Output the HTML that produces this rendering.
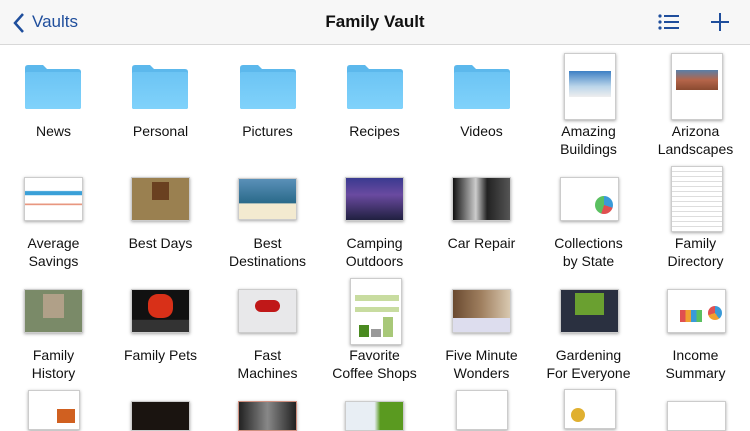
<!DOCTYPE html><html><head><style>
body{margin:0;width:750px;height:422px;overflow:hidden;background:#fff;font-family:"Liberation Sans",sans-serif;position:relative}
.hdr{position:absolute;left:0;top:0;width:750px;height:44px;background:#f7f7f7;border-bottom:1px solid #d8d8d8}
.t{position:absolute;font-size:17px}
.lbl{position:absolute;width:107px;text-align:center;font-size:14px;line-height:18px;color:#111}
.th{position:absolute;box-shadow:0 1px 3px rgba(0,0,0,.35);border:1px solid #ccc;box-sizing:border-box}
.fold{position:absolute;width:56px;height:44px}
</style></head><body>
<div class="hdr">
<svg style="position:absolute;left:12px;top:12px" width="14" height="22"><path d="M11 2 L3 11 L11 20" stroke="#1f4e9c" stroke-width="2.5" fill="none"/></svg>
<div class="t" style="left:32px;top:12px;color:#1f4e9c;font-size:17px">Vaults</div>
<div class="t" style="left:0;width:750px;text-align:center;top:12px;font-weight:bold;color:#111">Family Vault</div>
<svg style="position:absolute;left:658px;top:13px" width="22" height="18" fill="#1f4e9c"><circle cx="2" cy="3" r="1.6"/><circle cx="2" cy="9" r="1.6"/><circle cx="2" cy="15" r="1.6"/><rect x="6" y="2" width="15" height="2"/><rect x="6" y="8" width="15" height="2"/><rect x="6" y="14" width="15" height="2"/></svg>
<svg style="position:absolute;left:710px;top:12px" width="20" height="20"><path d="M10 1V19M1 10H19" stroke="#1f4e9c" stroke-width="2"/></svg>
</div>
<!-- folders -->
<svg width="0" height="0"><defs><linearGradient id="fg" x1="0" y1="0" x2="0" y2="1"><stop offset="0" stop-color="#6cc4f4"/><stop offset="1" stop-color="#80d2fb"/></linearGradient></defs></svg>
<script></script>
<div id="f"></div>
<svg class="fold" style="left:25px;top:65px" viewBox="0 0 56 44"><path d="M0 3Q0 0 3 0H18L22 4H53Q56 4 56 7V42Q56 44 54 44H2Q0 44 0 42Z" fill="#5cb8ec"/><path d="M0 9Q0 7 2 7H54Q56 7 56 9V42Q56 44 54 44H2Q0 44 0 42Z" fill="url(#fg)"/></svg>
<svg class="fold" style="left:132px;top:65px" viewBox="0 0 56 44"><path d="M0 3Q0 0 3 0H18L22 4H53Q56 4 56 7V42Q56 44 54 44H2Q0 44 0 42Z" fill="#5cb8ec"/><path d="M0 9Q0 7 2 7H54Q56 7 56 9V42Q56 44 54 44H2Q0 44 0 42Z" fill="url(#fg)"/></svg>
<svg class="fold" style="left:240px;top:65px" viewBox="0 0 56 44"><path d="M0 3Q0 0 3 0H18L22 4H53Q56 4 56 7V42Q56 44 54 44H2Q0 44 0 42Z" fill="#5cb8ec"/><path d="M0 9Q0 7 2 7H54Q56 7 56 9V42Q56 44 54 44H2Q0 44 0 42Z" fill="url(#fg)"/></svg>
<svg class="fold" style="left:347px;top:65px" viewBox="0 0 56 44"><path d="M0 3Q0 0 3 0H18L22 4H53Q56 4 56 7V42Q56 44 54 44H2Q0 44 0 42Z" fill="#5cb8ec"/><path d="M0 9Q0 7 2 7H54Q56 7 56 9V42Q56 44 54 44H2Q0 44 0 42Z" fill="url(#fg)"/></svg>
<svg class="fold" style="left:454px;top:65px" viewBox="0 0 56 44"><path d="M0 3Q0 0 3 0H18L22 4H53Q56 4 56 7V42Q56 44 54 44H2Q0 44 0 42Z" fill="#5cb8ec"/><path d="M0 9Q0 7 2 7H54Q56 7 56 9V42Q56 44 54 44H2Q0 44 0 42Z" fill="url(#fg)"/></svg>
<div class="th" style="left:564px;top:53px;width:52px;height:67px;background:#fff"><div style="margin:17px 4px 0;height:26px;background:linear-gradient(#3d7fc4,#bcd6ea 60%,#eee)"></div></div>
<div class="th" style="left:671px;top:53px;width:52px;height:67px;background:#fff"><div style="margin:16px 4px 0;height:20px;background:linear-gradient(#5a7fa8,#b5654a 50%,#8a4a30)"></div></div>
<div class="lbl" style="left:0;top:122px">News</div>
<div class="lbl" style="left:107px;top:122px">Personal</div>
<div class="lbl" style="left:214px;top:122px">Pictures</div>
<div class="lbl" style="left:321px;top:122px">Recipes</div>
<div class="lbl" style="left:428px;top:122px">Videos</div>
<div class="lbl" style="left:535px;top:122px">Amazing<br>Buildings</div>
<div class="lbl" style="left:642px;top:122px">Arizona<br>Landscapes</div>
<!-- row 2 -->
<div class="th" style="left:24px;top:177px;width:59px;height:44px;background:linear-gradient(#fff 30%,#3aa0d8 32%,#3aa0d8 40%,#fff 42%,#fff 60%,#e07050 62%,#fff 66%)"></div>
<div class="th" style="left:131px;top:177px;width:59px;height:44px;background:#9a8050"><div style="margin:4px 20px;height:18px;background:#6a4020"></div></div>
<div class="th" style="left:238px;top:178px;width:59px;height:42px;background:linear-gradient(#5a90b8,#2a6a8a 60%,#f3ead0 62%)"></div>
<div class="th" style="left:345px;top:177px;width:59px;height:44px;background:linear-gradient(#3a3a90,#6a4aa0 40%,#202040)"></div>
<div class="th" style="left:452px;top:177px;width:59px;height:44px;background:linear-gradient(90deg,#111,#ccc 40%,#222 60%,#555)"></div>
<div class="th" style="left:560px;top:177px;width:59px;height:44px;background:#fff"><div style="position:absolute;left:34px;top:18px;width:18px;height:18px;border-radius:50%;background:conic-gradient(#3a9ad8 0 30%,#e05050 0 55%,#5ac060 0)"></div></div>
<div class="th" style="left:671px;top:166px;width:52px;height:66px;background:repeating-linear-gradient(#fff 0 4px,#ddd 4px 5px)"></div>
<div class="lbl" style="left:0;top:234px">Average<br>Savings</div>
<div class="lbl" style="left:107px;top:234px">Best Days</div>
<div class="lbl" style="left:214px;top:234px">Best<br>Destinations</div>
<div class="lbl" style="left:321px;top:234px">Camping<br>Outdoors</div>
<div class="lbl" style="left:428px;top:234px">Car Repair</div>
<div class="lbl" style="left:535px;top:234px">Collections<br>by State</div>
<div class="lbl" style="left:642px;top:234px">Family<br>Directory</div>
<!-- row 3 -->
<div class="th" style="left:24px;top:289px;width:59px;height:44px;background:#7a8a68"><div style="margin:4px 18px;height:24px;background:#b0a088"></div></div>
<div class="th" style="left:131px;top:289px;width:59px;height:44px;background:linear-gradient(#111 70%,#333 72%)"><div style="margin:4px 16px;height:24px;background:#d83018;border-radius:40%"></div></div>
<div class="th" style="left:238px;top:289px;width:59px;height:44px;background:#e8e8ea"><div style="margin:10px 16px;height:12px;background:#c01818;border-radius:6px"></div></div>
<div class="th" style="left:350px;top:278px;width:52px;height:67px;background:#fff"><div style="position:absolute;left:8px;top:46px;width:10px;height:12px;background:#4a8a20"></div><div style="position:absolute;left:20px;top:50px;width:10px;height:8px;background:#999"></div><div style="position:absolute;left:32px;top:38px;width:10px;height:20px;background:#a8c878"></div><div style="position:absolute;left:4px;top:16px;width:44px;height:6px;background:#c8dca0"></div><div style="position:absolute;left:4px;top:28px;width:44px;height:5px;background:#c8dca0"></div></div>
<div class="th" style="left:452px;top:289px;width:59px;height:44px;background:linear-gradient(90deg,#6a4a30,#a08060 50%,#d8c8b0)"><div style="position:absolute;bottom:0;left:0;right:0;height:14px;background:#dde"></div></div>
<div class="th" style="left:560px;top:289px;width:59px;height:44px;background:#2a3040"><div style="margin:3px 14px;height:22px;background:#6aa030"></div></div>
<div class="th" style="left:667px;top:289px;width:59px;height:44px;background:#fff"><div style="position:absolute;left:40px;top:16px;width:14px;height:14px;border-radius:50%;background:conic-gradient(#3a9ad8 0 40%,#f0a030 0 70%,#e05050 0)"></div><div style="position:absolute;left:12px;top:20px;width:22px;height:12px;background:linear-gradient(90deg,#e05050 25%,#f0a030 25% 50%,#3a9ad8 50% 75%,#5ac060 75%)"></div></div>
<div class="lbl" style="left:0;top:346px">Family<br>History</div>
<div class="lbl" style="left:107px;top:346px">Family Pets</div>
<div class="lbl" style="left:214px;top:346px">Fast<br>Machines</div>
<div class="lbl" style="left:321px;top:346px">Favorite<br>Coffee Shops</div>
<div class="lbl" style="left:428px;top:346px">Five Minute<br>Wonders</div>
<div class="lbl" style="left:535px;top:346px">Gardening<br>For Everyone</div>
<div class="lbl" style="left:642px;top:346px">Income<br>Summary</div>
<!-- row 4 -->
<div class="th" style="left:28px;top:390px;width:52px;height:40px;background:#fff"><div style="position:absolute;left:28px;top:18px;width:18px;height:14px;background:#d06020"></div></div>
<div class="th" style="left:131px;top:401px;width:59px;height:30px;background:#1a1410"></div>
<div class="th" style="left:238px;top:401px;width:59px;height:30px;background:linear-gradient(90deg,#222,#888,#222);border-color:#d09080"></div>
<div class="th" style="left:345px;top:401px;width:59px;height:30px;background:linear-gradient(90deg,#e8eef4 50%,#5a9a20 60%)"></div>
<div class="th" style="left:456px;top:390px;width:52px;height:40px;background:#fff"></div>
<div class="th" style="left:564px;top:389px;width:52px;height:40px;background:#fff"><div style="position:absolute;left:6px;top:18px;width:14px;height:14px;border-radius:50%;background:#e0b030"></div></div>
<div class="th" style="left:667px;top:401px;width:59px;height:30px;background:#fff"></div>
</body></html>
